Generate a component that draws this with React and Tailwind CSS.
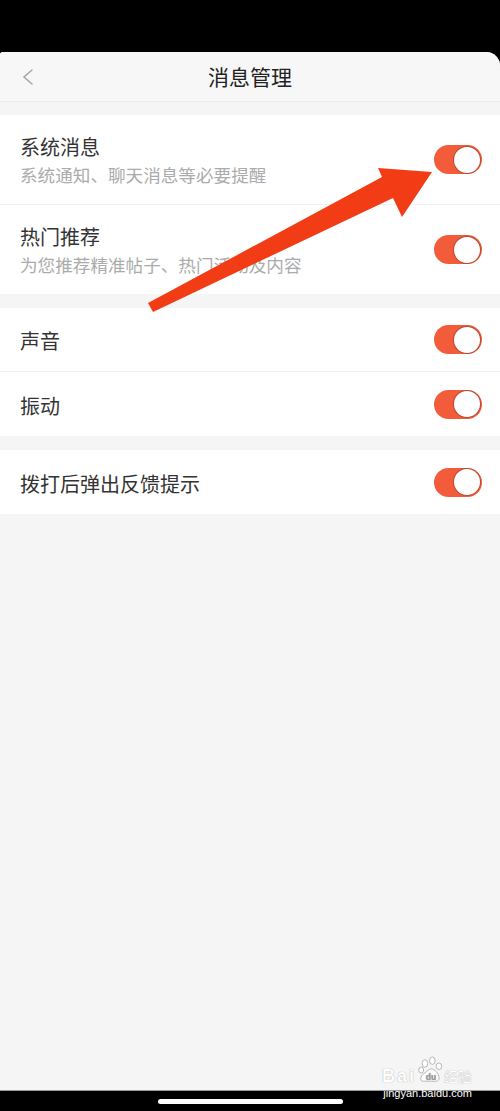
import React from "react";

const font = { fontFamily: '"Noto Sans CJK SC", "Noto Sans", sans-serif' };

// orange switch, always on in this screen
const Toggle = () => (
  <div className="w-[48px] h-[29px] rounded-full bg-[#f25c3b] flex items-center justify-end px-[2px] shrink-0">
    <div className="w-[26px] h-[26px] rounded-full bg-white shadow-[0_0_0_1px_rgba(140,60,40,0.55)]" />
  </div>
);

const Row = ({ title, sub, h, last }) => (
  <div
    className={`flex items-center justify-between pl-[20px] pr-[18px] ${h} ${
      last ? "" : "border-b border-[#f1f1f1]"
    }`}
  >
    <div className="flex flex-col pt-[3px]">
      <span className="text-[20px] leading-[28px] text-[#333333]">{title}</span>
      {sub && (
        <span className="text-[17.6px] leading-[28px] text-[#ababab]">{sub}</span>
      )}
    </div>
    <Toggle />
  </div>
);

const App = () => {
  return (
    <div className="relative w-[500px] h-[1111px] bg-black flex flex-col overflow-hidden" style={font}>
      {/* status bar */}
      <div className="h-[52px] shrink-0" />

      <div className="flex-1 flex flex-col bg-[#f5f5f5] rounded-tr-[14px] rounded-tl-[3px] overflow-hidden">
        {/* header */}
        <div className="h-[50px] grid grid-cols-[60px_1fr_60px] items-center bg-[#f7f7f7] border-b border-[#ebebeb] shrink-0">
          <div className="pl-[21px] flex items-center">
            <svg width="14" height="18" viewBox="0 0 14 18">
              <path d="M11 2 L3 9 L11 16" fill="none" stroke="#a8a8a8" strokeWidth="1.6" strokeLinecap="round" />
            </svg>
          </div>
          <div className="text-center text-[21px] text-[#222222]">消息管理</div>
          <div />
        </div>

        <div className="mt-[13px] bg-white">
          <Row title="系统消息" sub="系统通知、聊天消息等必要提醒" h="h-[90px]" />
          <Row title="热门推荐" sub="为您推荐精准帖子、热门活动及内容" h="h-[89px]" last />
        </div>

        <div className="mt-[14px] bg-white">
          <Row title="声音" h="h-[64px]" />
          <Row title="振动" h="h-[64px]" last />
        </div>

        <div className="mt-[14px] bg-white">
          <Row title="拨打后弹出反馈提示" h="h-[64px]" last />
        </div>
      </div>

      {/* home indicator bar */}
      <div className="h-[21px] shrink-0 flex items-center justify-center border-t border-[#9a9a9a]">
        <div className="w-[185px] h-[5px] rounded-full bg-white" />
      </div>

      {/* red annotation arrow */}
      <svg className="absolute inset-0 pointer-events-none" width="500" height="1111" viewBox="0 0 500 1111">
        <polygon
          points="148,303 382,177 378,168 432,172 402,217 393,198 153,312"
          fill="#f23c16"
        />
      </svg>

      {/* baidu jingyan watermark */}
      <div className="absolute right-[28px] bottom-[11px] w-[90px] flex flex-col pointer-events-none">
        <div className="flex items-end text-white [text-shadow:0_0_1px_#8a8a8a]">
          <span
            className="w-[35px] text-[18px] leading-[16px] font-bold tracking-[2px]"
            style={{ fontFamily: '"Liberation Sans", sans-serif' }}
          >
            Bai
          </span>
          <svg width="27" height="28" viewBox="0 0 28 30">
            <g fill="white" stroke="#a0a0a0" strokeWidth="0.8">
              <ellipse cx="8" cy="8" rx="3" ry="4" />
              <ellipse cx="16" cy="5" rx="3" ry="4" />
              <ellipse cx="23" cy="11" rx="3" ry="3.5" />
              <ellipse cx="4" cy="15" rx="2.6" ry="3.2" />
              <path d="M6 27 C2 27 3 21 8 18 C11 16 13 13 16 14 C20 15 24 21 23 25 C22 28 18 27 14 27 Z" />
            </g>
            <text x="9" y="26" fontSize="9" fontWeight="bold" fill="#9a9a9a" fontFamily="Liberation Sans, sans-serif">du</text>
          </svg>
          <span className="text-[14px] leading-[16px]">经验</span>
        </div>
        <span
          className="text-[11px] leading-[13px] text-white mt-[3px] text-right"
          style={{ fontFamily: '"Liberation Sans", sans-serif' }}
        >
          jingyan.baidu.com
        </span>
      </div>
    </div>
  );
};

export default App;
